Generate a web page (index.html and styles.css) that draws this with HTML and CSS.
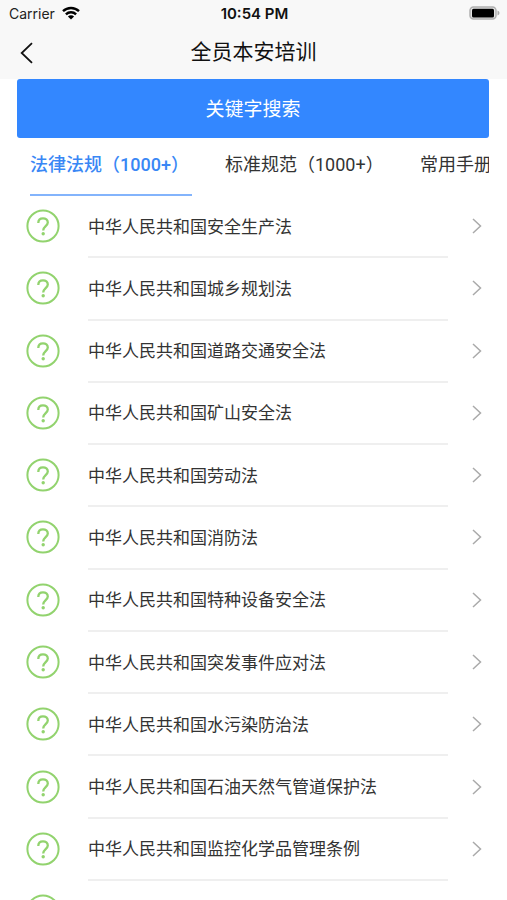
FILE: index.html
```html
<!DOCTYPE html>
<html lang="zh-CN">
<head>
<meta charset="utf-8">
<meta name="viewport" content="width=device-width, initial-scale=1">
<title>全员本安培训</title>
<link rel="stylesheet" href="styles.css">
</head>
<body>
<svg class="symbols" aria-hidden="true">
  <symbol id="help" viewBox="0 0 34 34">
    <circle cx="17" cy="17" r="15.600" fill="none" stroke="currentColor" stroke-width="2"/>
    <path d="M12.300 13.900C12.300 10.900 14.300 9.300 17 9.300s4.800 1.700 4.800 4.300c0 3.400-4.600 3.900-4.600 8" fill="none" stroke="currentColor" stroke-width="2.300"/>
    <circle cx="17.200" cy="24.800" r="1.700" fill="currentColor"/>
  </symbol>
  <symbol id="next" viewBox="0 0 10 16">
    <path d="M1 1l7.500 7L1 15" fill="none" stroke="currentColor" stroke-width="1.500"/>
  </symbol>
</svg>
<header class="top">
  <div class="status">
    <div class="carrier">
      <span>Carrier</span>
      <svg class="wifi" viewBox="0 0 18 14" aria-hidden="true">
        <path d="M1 5.200a11.500 11.500 0 0 1 16 0M3.900 8.300a7.300 7.300 0 0 1 10.200 0" fill="none" stroke="#000" stroke-width="2.400"/>
        <path d="M9 13.600L5.900 10.500a4.400 4.400 0 0 1 6.200 0z" fill="#000"/>
      </svg>
    </div>
    <time class="clock">10:54 PM</time>
    <svg class="battery" viewBox="0 0 31 14" aria-hidden="true">
      <rect x="1" y="1" width="26" height="12" rx="3.500" fill="#e4e4e4" stroke="#b0b0b0" stroke-width="1.500"/>
      <rect x="3" y="2.700" width="22" height="8.800" rx="1.500" fill="#000"/>
      <path d="M28.500 4.500q2 .8 2 2.500t-2 2.500z" fill="#aaa"/>
    </svg>
  </div>
  <div class="nav">
    <button class="back" type="button" aria-label="返回">
      <svg viewBox="0 0 13 22" aria-hidden="true"><path d="M12 1.200L1.700 11 12 20.800" fill="none" stroke="#111" stroke-width="1.800"/></svg>
    </button>
    <h1 class="title">全员本安培训</h1>
  </div>
</header>
<main class="main">
  <button class="search" type="button">关键字搜索</button>
  <nav class="tabs">
    <a class="tab active" href="#laws">法律法规（1000+）</a>
    <a class="tab" href="#standards">标准规范（1000+）</a>
    <a class="tab" href="#manuals">常用手册</a>
  </nav>
  <ul class="list" id="laws">
    <li><a class="row" href="#1"><svg class="help"><use href="#help"/></svg><span class="name">中华人民共和国安全生产法</span><svg class="next"><use href="#next"/></svg></a></li>
    <li><a class="row" href="#2"><svg class="help"><use href="#help"/></svg><span class="name">中华人民共和国城乡规划法</span><svg class="next"><use href="#next"/></svg></a></li>
    <li><a class="row" href="#3"><svg class="help"><use href="#help"/></svg><span class="name">中华人民共和国道路交通安全法</span><svg class="next"><use href="#next"/></svg></a></li>
    <li><a class="row" href="#4"><svg class="help"><use href="#help"/></svg><span class="name">中华人民共和国矿山安全法</span><svg class="next"><use href="#next"/></svg></a></li>
    <li><a class="row" href="#5"><svg class="help"><use href="#help"/></svg><span class="name">中华人民共和国劳动法</span><svg class="next"><use href="#next"/></svg></a></li>
    <li><a class="row" href="#6"><svg class="help"><use href="#help"/></svg><span class="name">中华人民共和国消防法</span><svg class="next"><use href="#next"/></svg></a></li>
    <li><a class="row" href="#7"><svg class="help"><use href="#help"/></svg><span class="name">中华人民共和国特种设备安全法</span><svg class="next"><use href="#next"/></svg></a></li>
    <li><a class="row" href="#8"><svg class="help"><use href="#help"/></svg><span class="name">中华人民共和国突发事件应对法</span><svg class="next"><use href="#next"/></svg></a></li>
    <li><a class="row" href="#9"><svg class="help"><use href="#help"/></svg><span class="name">中华人民共和国水污染防治法</span><svg class="next"><use href="#next"/></svg></a></li>
    <li><a class="row" href="#10"><svg class="help"><use href="#help"/></svg><span class="name">中华人民共和国石油天然气管道保护法</span><svg class="next"><use href="#next"/></svg></a></li>
    <li><a class="row" href="#11"><svg class="help"><use href="#help"/></svg><span class="name">中华人民共和国监控化学品管理条例</span><svg class="next"><use href="#next"/></svg></a></li>
    <li><a class="row" href="#12" aria-label="更多"><svg class="help"><use href="#help"/></svg><span class="name"></span><svg class="next"><use href="#next"/></svg></a></li>
  </ul>
</main>
</body>
</html>
```
FILE: styles.css
```css
* {
  box-sizing: border-box;
}

body {
  margin: 0;
  height: 100vh;
  display: flex;
  flex-direction: column;
  overflow: hidden;
  background: #fff;
  color: #333;
  font-family: Inter, "Noto Sans CJK SC", sans-serif;
}

a {
  color: inherit;
  text-decoration: none;
}

button {
  border: 0;
  padding: 0;
  font-family: inherit;
  cursor: pointer;
}

.symbols {
  display: none;
}

.top {
  background: #f8f8f8;
}

.status {
  display: grid;
  grid-template-columns: 1fr auto 1fr;
  align-items: center;
  height: 26px;
  padding: 0 7px 0 9px;
  color: #222;
  font-size: 14px;
}

.carrier {
  display: flex;
  align-items: center;
  gap: 7px;
}

.wifi {
  width: 18px;
  height: 14px;
}

.clock {
  color: #111;
  font-size: 15px;
  font-weight: 600;
}

.battery {
  width: 31px;
  height: 14px;
  justify-self: end;
}

.nav {
  display: grid;
  grid-template-columns: 52px 1fr 52px;
  align-items: center;
  height: 53px;
}

.back {
  display: flex;
  align-items: center;
  height: 44px;
  padding-left: 20px;
  background: none;
}

.back svg {
  width: 13px;
  height: 22px;
}

.title {
  margin: 0;
  color: #111;
  font-size: 21px;
  font-weight: 400;
  line-height: 42px;
  padding-bottom: 2px;
  text-align: center;
}

.main {
  flex: 1;
  min-height: 0;
  display: flex;
  flex-direction: column;
  padding: 0 18px 0 17px;
}

.search {
  flex: none;
  height: 59px;
  padding-bottom: 2px;
  border-radius: 3px;
  background: #3387ff;
  color: #fff;
  font-size: 19px;
}

.tabs {
  flex: none;
  display: flex;
  gap: 33px;
  padding-left: 13px;
  overflow: hidden;
}

.tab {
  flex: none;
  min-width: 162px;
  height: 58px;
  border-bottom: 2px solid transparent;
  font-family: Roboto, "Noto Sans CJK SC", sans-serif;
  font-size: 18px;
  line-height: 54px;
  white-space: nowrap;
}

.tab.active {
  border-color: #83b4fc;
  color: #3987f5;
  font-weight: 500;
}

.list {
  flex: 1;
  min-height: 0;
  display: grid;
  grid-template-rows: repeat(11, minmax(44px, 1fr)) 19px;
  margin: 0;
  padding: 0;
  list-style: none;
}

.row {
  display: grid;
  grid-template-columns: 71px 1fr 41px;
  align-items: center;
  height: 100%;
  min-height: 62px;
}

.help {
  width: 34px;
  height: 34px;
  margin: 0 0 2px 9px;
  color: #92d36e;
}

.name {
  display: flex;
  align-items: center;
  height: 100%;
  padding-bottom: 2px;
  border-bottom: 2px solid #efefef;
  font-size: 17px;
}

.next {
  width: 10px;
  height: 16px;
  margin: 0 0 2px 24px;
  color: #aaa;
}
```
